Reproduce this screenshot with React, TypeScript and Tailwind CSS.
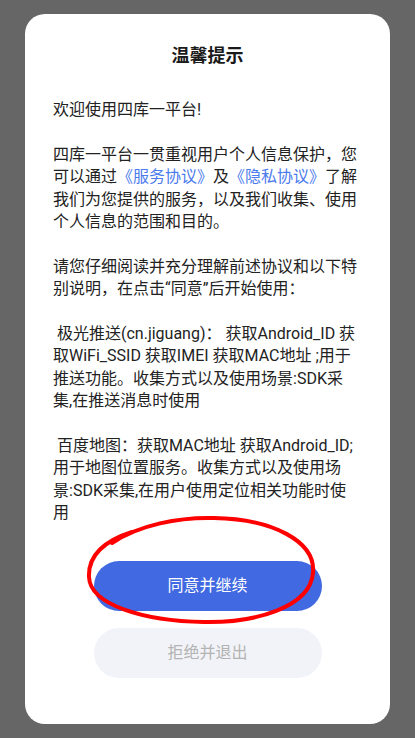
import React from "react";

export default function App() {
  const font = { fontFamily: "Roboto, 'Noto Sans CJK SC', 'Noto Sans', sans-serif" };
  return (
    <div
      className="w-[415px] h-[738px] bg-[#666666] px-[25px] py-[14px] flex"
      style={font}
    >
      <div className="flex-1 bg-white rounded-[20px] flex flex-col items-center pt-[29px]">
        <div className="text-[18px] leading-[26px] font-bold text-[#1a1a1a]">温馨提示</div>
        <div className="self-stretch pl-[28px] pr-[20px] mt-[30px] text-[16px] leading-[1.4] text-[#222222] whitespace-nowrap">
          <p>欢迎使用四库一平台!</p>
          <p className="mt-[22.4px]">
            四库一平台一贯重视用户个人信息保护，您
            <br />
            可以通过<span className="text-[#4b7bec]">《服务协议》</span>及<span className="text-[#4b7bec]">《隐私协议》</span>了解
            <br />
            我们为您提供的服务，以及我们收集、使用
            <br />
            个人信息的范围和目的。
          </p>
          <p className="mt-[22.4px]">
            请您仔细阅读并充分理解前述协议和以下特
            <br />
            别说明，在点击“同意”后开始使用：
          </p>
          <p className="mt-[22.4px]">
            &nbsp;极光推送(cn.jiguang)： 获取Android_ID 获
            <br />
            取WiFi_SSID 获取IMEI 获取MAC地址 ;用于
            <br />
            推送功能。收集方式以及使用场景:SDK采
            <br />
            集,在推送消息时使用
          </p>
          <p className="mt-[22.4px]">
            &nbsp;百度地图：获取MAC地址 获取Android_ID;
            <br />
            用于地图位置服务。收集方式以及使用场
            <br />
            景:SDK采集,在用户使用定位相关功能时使
            <br />
            用
          </p>
        </div>
        <div className="relative mt-[37px]">
          <button className="w-[228px] h-[50px] rounded-full bg-[#4169e1] text-white text-[16px]">
            同意并继续
          </button>
          <svg
            className="absolute left-[-10px] top-[-50px] pointer-events-none"
            width="240"
            height="120"
            viewBox="0 0 240 120"
            fill="none"
          >
            <path
              d="M 28 32 C 55 14 95 6 130 7 C 188 8 232 30 229 62 C 226 96 172 112 120 111 C 60 110 6 94 5 66 C 4 44 20 30 48 21"
              stroke="#ff0000"
              strokeWidth="4"
              strokeLinecap="round"
            />
          </svg>
        </div>
        <button className="mt-[17px] w-[228px] h-[50px] rounded-full bg-[#f2f3f8] text-[#b3b3b3] text-[16px]">
          拒绝并退出
        </button>
      </div>
    </div>
  );
}
